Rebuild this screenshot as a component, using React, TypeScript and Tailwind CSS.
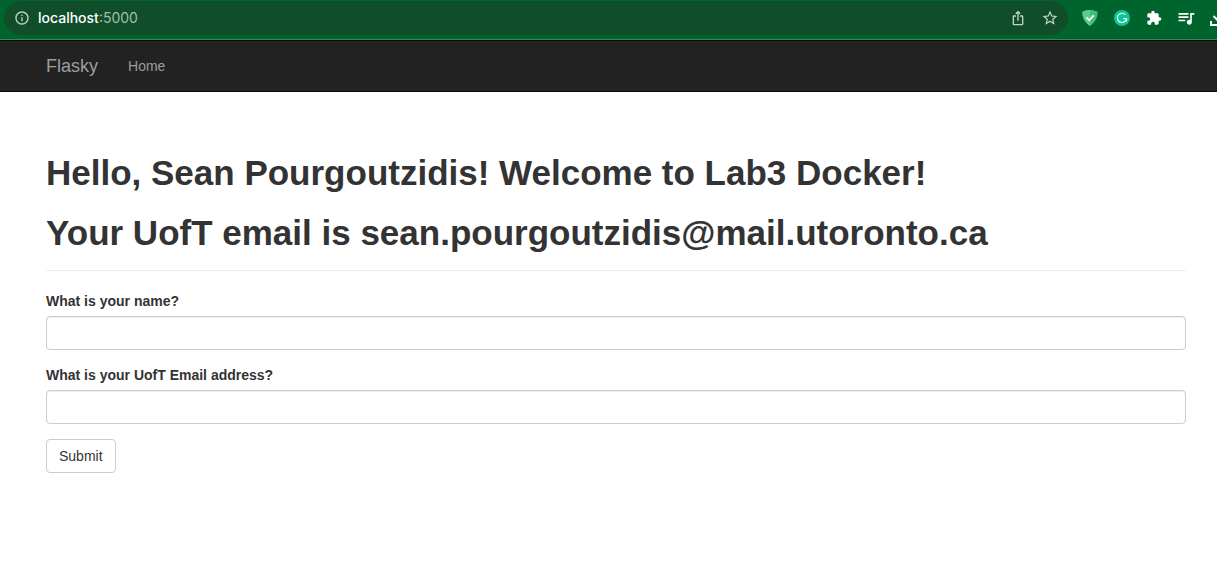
import React from "react";
import {
  MdExtension,
  MdInfoOutline,
  MdIosShare,
  MdQueueMusic,
  MdStarBorder,
} from "react-icons/md";

function ShieldIcon() {
  return (
    <svg width="16" height="16" viewBox="0 0 16 16" aria-hidden="true">
      <path d="M8 0C5.6 0 2.7.6.4 1.7c0 2.5 0 8.7 7.6 14.3 7.6-5.6 7.6-11.8 7.6-14.3C13.3.6 10.4 0 8 0z" fill="#3fc07a" />
      <path d="M8 0C5.6 0 2.7.6.4 1.7c0 2.5 0 8.7 7.6 14.3z" fill="#5fcb86" />
      <path d="M4.4 7.4l2.9 2.9 4.4-5" fill="none" stroke="#fff" strokeWidth="1.8" />
    </svg>
  );
}

function GrammarlyIcon() {
  return (
    <svg width="16" height="16" viewBox="0 0 16 16" aria-hidden="true">
      <circle cx="8" cy="8" r="8" fill="#11c39a" />
      <path
        d="M11.3 4.7a4.6 4.6 0 1 0 1.2 3.9H9.2M12.5 8.6v2.8"
        fill="none"
        stroke="#e6fff7"
        strokeWidth="1.2"
      />
    </svg>
  );
}

function DownloadIcon() {
  return (
    <svg width="18" height="18" viewBox="0 0 18 18" aria-hidden="true">
      <path d="M9 2v9M4.5 7L9 11.5 13.5 7M2 12v4h14v-4" fill="none" stroke="#fff" strokeWidth="2" />
    </svg>
  );
}

function ToolbarButton({ label, children }: { label: string; children: React.ReactNode }) {
  return (
    <button type="button" aria-label={label} className="flex h-8 w-8 shrink-0 items-center justify-center">
      {children}
    </button>
  );
}

function BrowserBar() {
  return (
    <div className="flex h-10 items-start overflow-hidden border-b border-[#3a8657] bg-[#00642d] pt-px pl-1">
      <div className="flex h-[34px] min-w-0 flex-1 items-center rounded-full bg-[#104e2a] pr-0.5 pl-2.5">
        <MdInfoOutline size={16} className="shrink-0 text-[#c3d2c9]" />
        <span className="ml-2 flex-1 font-['Inter',sans-serif] text-sm text-[#a3bfad]">
          <span className="font-medium text-white">localhost</span>:5000
        </span>
        <ToolbarButton label="Share">
          <MdIosShare size={16} className="text-[#c3d2c9]" />
        </ToolbarButton>
        <ToolbarButton label="Bookmark">
          <MdStarBorder size={18} className="text-[#c3d2c9]" />
        </ToolbarButton>
      </div>
      <div className="-mr-[17px] flex h-[34px] items-center pl-1.5 text-white">
        <ToolbarButton label="Ad blocker">
          <ShieldIcon />
        </ToolbarButton>
        <ToolbarButton label="Grammarly">
          <GrammarlyIcon />
        </ToolbarButton>
        <ToolbarButton label="Extensions">
          <MdExtension size={16} />
        </ToolbarButton>
        <ToolbarButton label="Media">
          <MdQueueMusic size={20} />
        </ToolbarButton>
        <ToolbarButton label="Downloads">
          <DownloadIcon />
        </ToolbarButton>
      </div>
    </div>
  );
}

function Field({ id, label, type }: { id: string; label: string; type: string }) {
  return (
    <div className="mb-[15px]">
      <label htmlFor={id} className="mb-[5px] block font-bold">
        {label}
      </label>
      <input
        id={id}
        type={type}
        className="block h-[34px] w-full rounded border border-[#ccc] bg-white px-3 py-1.5 text-[#555] shadow-[inset_0_1px_1px_rgba(0,0,0,0.075)]"
      />
    </div>
  );
}

export default function App() {
  return (
    <div className="min-h-screen bg-white font-['Liberation_Sans',Arial,sans-serif] text-sm leading-5 text-[#333]">
      <BrowserBar />
      <nav className="flex h-[52px] items-center gap-[30px] border-y border-[#080808] bg-[#222] pr-[31px] pl-[46px] text-[#9d9d9d]">
        <a href="#" className="text-lg leading-5">
          Flasky
        </a>
        <a href="#">Home</a>
      </nav>
      <main className="pt-[61px] pr-[31px] pl-[46px]">
        <header className="mb-5 flex flex-col gap-5 border-b border-[#eee] pb-[17px] text-[35px] leading-10 font-bold">
          <h1>Hello, Sean Pourgoutzidis! Welcome to Lab3 Docker!</h1>
          <h1>Your UofT email is sean.pourgoutzidis@mail.utoronto.ca</h1>
        </header>
        <form onSubmit={(event) => event.preventDefault()}>
          <Field id="name" label="What is your name?" type="text" />
          <Field id="email" label="What is your UofT Email address?" type="text" />
          <button type="submit" className="h-[34px] rounded border border-[#ccc] bg-white px-3">
            Submit
          </button>
        </form>
      </main>
    </div>
  );
}
